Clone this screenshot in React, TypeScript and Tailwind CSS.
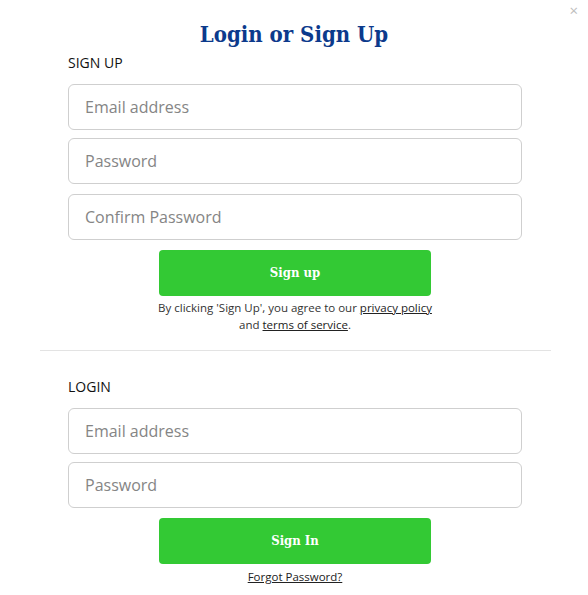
import React from "react";

const body = { fontFamily: '"Open Sans", "Noto Sans", sans-serif' };
const slab = { fontFamily: '"DejaVu Serif", "Liberation Serif", serif' };

function Field({ placeholder, type = "text", className = "" }: { placeholder: string; type?: string; className?: string }) {
  return (
    <input
      type={type}
      placeholder={placeholder}
      style={body}
      className={`block w-full h-[46px] rounded-[6px] border border-[#cfcfcf] bg-white px-4 text-[16px] text-[#333] placeholder:text-[#858585] outline-none ${className}`}
    />
  );
}

function GreenButton({ label }: { label: string }) {
  return (
    <button
      style={slab}
      className="mx-auto block w-[272px] h-[46px] rounded-[4px] bg-[#33c934] text-white text-[13px] font-bold font-stretch-condensed"
    >
      {label}
    </button>
  );
}

export default function App() {
  return (
    <div className="relative w-[588px] h-[595px] bg-white overflow-hidden" style={body}>
      <button className="absolute right-[10px] top-[3px] text-[#bdbdbd] text-[15px] leading-none">×</button>
      <h1
        style={slab}
        className="pt-[18px] text-center text-[22px] leading-[32px] font-bold font-stretch-condensed text-[#0c3a8c]"
      >
        Login or Sign Up
      </h1>

      <div className="pl-[68px] pr-[66px]">
        <div className="mt-[3px] h-[20px] text-[14px] leading-[20px] text-[#111]">SIGN UP</div>
        <Field placeholder="Email address" className="mt-[11px]" />
        <Field placeholder="Password" type="password" className="mt-[8px]" />
        <Field placeholder="Confirm Password" type="password" className="mt-[10px]" />
        <div className="mt-[10px]">
          <GreenButton label="Sign up" />
        </div>
        <p className="mt-[3px] text-center text-[11.5px] leading-[17px] text-[#333]">
          By clicking 'Sign Up', you agree to our <a className="underline text-[#222]">privacy policy</a>
          <br />
          and <a className="underline text-[#222]">terms of service</a>.
        </p>
      </div>

      <div className="mx-[40px] mt-[17px] mr-[37px] border-t border-[#e3e3e3]" />

      <div className="pl-[68px] pr-[66px]">
        <div className="mt-[26px] h-[20px] text-[14px] leading-[20px] text-[#111]">LOGIN</div>
        <Field placeholder="Email address" className="mt-[11px]" />
        <Field placeholder="Password" type="password" className="mt-[8px]" />
        <div className="mt-[10px]">
          <GreenButton label="Sign In" />
        </div>
        <p className="mt-[4px] text-center text-[11.5px] leading-[17px] text-[#222]">
          <a className="underline">Forgot Password?</a>
        </p>
      </div>
    </div>
  );
}
